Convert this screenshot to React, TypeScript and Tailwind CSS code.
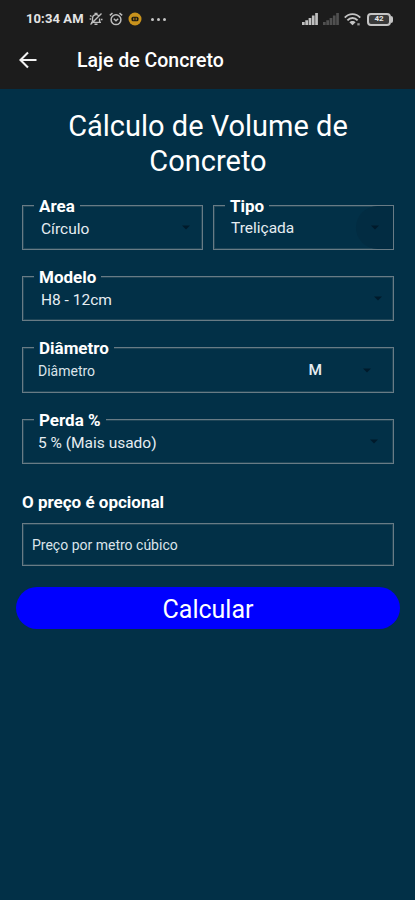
import type { ReactNode } from "react";

function Caret({ className = "" }: { className?: string }) {
  return (
    <svg viewBox="0 0 8 5" className={`h-[5px] w-2 fill-[#001a2b] ${className}`}>
      <path d="M0 0.5h8L4 4.5z" />
    </svg>
  );
}

/** Outlined box whose label is cut into the top border. */
function Field({ label, className = "", children }: { label?: string; className?: string; children: ReactNode }) {
  return (
    <div className={`relative flex items-center border border-[#687b85] shadow-[inset_0_0_0_1px_#1f4557] ${className}`}>
      {label && (
        <span className="absolute -top-[10px] left-[11px] bg-[#023047] px-[5px] text-[17px] leading-[20px] font-bold whitespace-nowrap">
          {label}
        </span>
      )}
      {children}
    </div>
  );
}

function MutedIcon() {
  return (
    <svg viewBox="0 0 14 14" className="h-[14px] w-[14px]" fill="none" stroke="#bdbdbd" strokeWidth="1.4">
      <path d="M3.5 10.2V6.3A3.5 3.5 0 0 1 10 4.4M10.6 6.5v3.7M2 10.4h10M5.5 12.3h3M12.5 1.5l-11 11M1 3.5l1.5 1M.6 7h1.5M12 7.5h1.5M5.5 1.5h3" />
    </svg>
  );
}

function AlarmIcon() {
  return (
    <svg viewBox="0 0 14 14" className="h-[14px] w-[14px]" fill="none" stroke="#bdbdbd" strokeWidth="1.5">
      <circle cx="7" cy="7.7" r="4.9" />
      <path d="M.8 3.4 3.5 1.2M13.2 3.4l-2.7-2.2M4.8 6.8 7 8.8l2.2-2" />
    </svg>
  );
}

function Signal({ className }: { className: string }) {
  return (
    <svg viewBox="0 0 16 12" className={`h-3 w-4 ${className}`}>
      <path d="M0 9h2.7v3H0zM3.3 7.2H6V12H3.3zM6.6 5h2.7v7H6.6zM9.9 2.6h2.7V12H9.9zM13.2 0h2.7v12h-2.7z" />
    </svg>
  );
}

function StatusBar() {
  return (
    <div className="flex h-[38px] items-center pl-[26px]">
      <span className="w-[58px] text-[13px] font-bold tracking-[0.1px] whitespace-nowrap text-[#e4e4e4]">10:34 AM</span>
      <div className="ml-[5px] flex items-center gap-[6px]">
        <MutedIcon />
        <AlarmIcon />
        <svg viewBox="0 0 14 14" className="ml-[-1px] h-[14px] w-[14px]">
          <circle cx="7" cy="7" r="6.5" fill="#c8921c" />
          <rect x="3.5" y="4.7" width="7" height="4.6" rx="1.6" fill="#1c1a14" />
          <path d="M5.8 5.8v2.4M8.2 5.8v2.4" stroke="#c8921c" />
        </svg>
      </div>
      <div className="ml-[9px] flex gap-[3px]">
        <i className="size-[3px] rounded-full bg-[#c4c4c4]" />
        <i className="size-[3px] rounded-full bg-[#c4c4c4]" />
        <i className="size-[3px] rounded-full bg-[#c4c4c4]" />
      </div>
      <div className="mr-[24px] ml-auto flex items-center">
        <Signal className="fill-[#c0c0c0]" />
        <Signal className="ml-[5px] fill-[#505050]" />
        <svg viewBox="0 0 18 13" className="ml-[5px] h-[13px] w-[18px]" fill="none" stroke="#c4c4c4" strokeWidth="1.9">
          <path d="M.8 4.7C5-.1 12-.1 16.2 4.7M3.4 7.3c2.8-3 7.4-3 10.2 0" />
          <path d="M5.4 9.2c1.6-1.7 4.6-1.7 6.2 0l-3.1 3z" fill="#c4c4c4" stroke="none" />
          <path d="M13.3 10.2h2.4v2.2h-2.4z" fill="#999" stroke="none" />
        </svg>
        <div className="relative ml-[5px] flex h-[13px] w-[24px] items-center justify-center rounded-[4px] border-2 border-[#c4c4c4] bg-[#3a3a3a] text-[8px] font-bold text-[#e4e4e4]">
          42
          <i className="absolute top-[1px] -right-[4px] h-[7px] w-[2px] rounded-r bg-[#c4c4c4]" />
        </div>
      </div>
    </div>
  );
}

export default function App() {
  return (
    <div className="flex h-[900px] w-[415px] flex-col overflow-hidden bg-[#023047] font-['Roboto',sans-serif] text-white">
      <header className="h-[89px] bg-[#1c1c1c]">
        <StatusBar />
        <div className="flex h-[45px] items-center pl-[19px]">
          <svg viewBox="0 0 18 18" className="-mt-[2px] size-[18px]" fill="none" stroke="#f2f2f2" strokeWidth="2.1">
            <path d="M17.5 9H2M9 1.5 1.5 9 9 16.5" />
          </svg>
          <h1 className="ml-10 text-[19.5px] font-medium whitespace-nowrap">Laje de Concreto</h1>
        </div>
      </header>

      <main className="flex flex-col pr-[21px] pl-[22px]">
        <h2 className="mt-[20px] text-center text-[29px] leading-[35px]">
          Cálculo de Volume de
          <br />
          Concreto
        </h2>

        <div className="mt-[26px] flex gap-[10px]">
          <Field label="Area" className="h-[45px] w-[181px] pr-[12px] pl-[18px]">
            <span className="pt-[4px] text-[15.5px] text-[#e6edf2]">Círculo</span>
            <Caret className="ml-auto" />
          </Field>
          <Field label="Tipo" className="h-[45px] w-[181px] pr-[14px] pl-[17px]">
            <i className="absolute inset-y-0 right-0 w-[37px] rounded-l-full bg-[#022c42]" />
            <span className="pt-[3px] text-[15.5px] text-[#e6edf2]">Treliçada</span>
            <Caret className="relative ml-auto" />
          </Field>
        </div>

        <Field label="Modelo" className="mt-[26px] h-[45px] pr-[11px] pl-[18px]">
          <span className="pt-[4px] text-[15.5px] text-[#e6edf2]">H8 - 12cm</span>
          <Caret className="ml-auto" />
        </Field>

        <Field label="Diâmetro" className="mt-[26px] h-[46px] pr-[22px] pl-[15px]">
          <span className="pt-[3px] text-[14px] text-[#dbe4ea]">Diâmetro</span>
          <span className="ml-auto pt-[2px] text-[15.5px] font-medium text-[#e6edf2]">M</span>
          <Caret className="ml-[41px]" />
        </Field>

        <Field label="Perda %" className="mt-[26px] h-[45px] pr-[15px] pl-[15px]">
          <span className="pt-[4px] text-[15.5px] text-[#e6edf2]">5 % (Mais usado)</span>
          <Caret className="ml-auto" />
        </Field>

        <p className="mt-[28px] text-[17px] leading-[20px] font-bold">O preço é opcional</p>

        <Field className="mt-[11px] h-[43px] pl-[9px]">
          <span className="pt-[2px] text-[14px] text-[#dbe4ea]">Preço por metro cúbico</span>
        </Field>

        <button className="-mr-[6px] -ml-[6px] mt-[21px] h-[42px] rounded-full bg-[#0000ff] pt-[3px] text-[25px]">
          Calcular
        </button>
      </main>
    </div>
  );
}
